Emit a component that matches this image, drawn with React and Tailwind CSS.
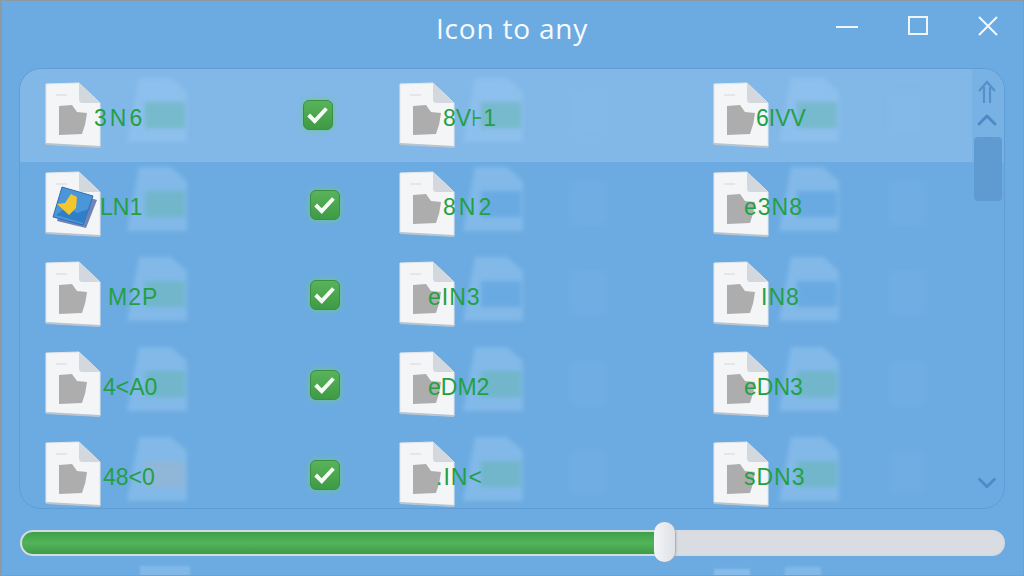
import { ChevronUp, ChevronDown } from 'lucide-react'

// label margin pulls the text over the page icon, it differs per cell in the picture
const ROWS = [
  {
    check: 'left-[258px] top-[18px]',
    cells: [
      { label: '3N6', ml: 'ml-[-7px] tracking-[3px]', ghost: 'green', art: 'folder' },
      { label: '8V⊦1', ml: 'ml-[-12px]', ghost: 'green', art: 'folder' },
      { label: '6IVV', ml: 'ml-[-13px]', ghost: 'green', art: 'folder' },
    ],
  },
  {
    check: 'left-[265px] top-[19px]',
    cells: [
      { label: 'LN1', ml: 'ml-[-1px]', ghost: 'green', art: 'picture' },
      { label: '8N2', ml: 'ml-[-12px] tracking-[3px]', ghost: 'blue', art: 'folder' },
      { label: 'e3N8', ml: 'ml-[-25px] tracking-[1px]', ghost: 'blue', art: 'folder' },
    ],
  },
  {
    check: 'left-[265px] top-[19px]',
    cells: [
      { label: 'M2P', ml: 'ml-[7px] tracking-[1px]', ghost: 'green', art: 'folder' },
      { label: 'eIN3', ml: 'ml-[-27px] tracking-[1px]', ghost: 'blue', art: 'folder' },
      { label: 'IN8', ml: 'ml-[-8px] tracking-[1px]', ghost: 'blue', art: 'folder' },
    ],
  },
  {
    check: 'left-[265px] top-[19px]',
    cells: [
      { label: '4<A0', ml: 'ml-[2px]', ghost: 'green', art: 'folder' },
      { label: 'eDM2', ml: 'ml-[-27px]', ghost: 'green', art: 'folder' },
      { label: 'eDN3', ml: 'ml-[-25px]', ghost: 'green', art: 'folder' },
    ],
  },
  {
    check: 'left-[265px] top-[19px]',
    cells: [
      { label: '48<0', ml: 'ml-[2px]', ghost: 'gray', art: 'folder' },
      { label: '.IN<', ml: 'ml-[-19px] tracking-[1px]', ghost: 'green', art: 'folder' },
      { label: 'sDN3', ml: 'ml-[-25px] tracking-[1px]', ghost: 'green', art: 'folder' },
    ],
  },
]

const GHOST_FILL = { green: '#62b3ae', blue: '#4f9bdc', gray: '#9db4c8' }

function FileIcon({ art }) {
  return (
    <svg width="56" height="66" viewBox="0 0 56 66" className="shrink-0 blur-[0.4px]">
      <path d="M1 2 L34 1 L55 21 L55 65 L1 62 Z" fill="#f4f5f7" stroke="#e3e6ea" strokeWidth="1" />
      <path d="M1 61 L55 64 L55 66 L1 63 Z" fill="#b9c4cf" />
      <path d="M34 1 L55 21 L37 21 Q34 21 34 17 Z" fill="#d3d8de" />
      <rect x="11" y="12" width="11" height="2" fill="#e4e6ea" />
      {art === 'folder' ? (
        <path d="M14 24 L27 23 L32 30 L42 31 Q41 42 37 52 L14 53 Z" fill="#adadae" />
      ) : (
        <g>
          <path d="M12 50 L41 57 L52 29 L22 20 Z" fill="#6f83b5" />
          <path d="M8 46 L38 54 L48 25 L17 16 Z" fill="#4a96d8" stroke="#2f6fb5" strokeWidth="1" />
          <path d="M11 44 L22 36 L32 42 L44 38 L38 52 Z" fill="#2f7fc8" />
          <path d="M12 33 L20 32 L26 23 L32 26 L31 37 L24 44 Z" fill="#f2c62f" />
        </g>
      )}
    </svg>
  )
}

function Ghost({ fill, className }) {
  return (
    <svg width="66" height="66" viewBox="0 0 66 66" className={`absolute blur-[2px] ${className}`}>
      <path d="M14 0 L46 0 L62 14 L62 64 L2 64 Z" fill="#98c8f1" fillOpacity="0.5" />
      {fill && <rect x="20" y="24" width="40" height="26" fill={fill} fillOpacity="0.5" />}
    </svg>
  )
}

function Check({ className }) {
  return (
    <div className={`absolute w-[30px] h-[30px] rounded-md bg-gradient-to-b from-[#58b35a] to-[#3f9a45] border border-[#3a8f42] shadow-[0_0_6px_#6fc88a] ${className}`}>
      <svg viewBox="0 0 30 30" className="w-full h-full">
        <path d="M5 15 L11.5 21.5 L24 8" fill="none" stroke="#f4faf4" strokeWidth="4.2" />
      </svg>
    </div>
  )
}

function Cell({ cell, width, ghostAt, farAt, children }) {
  return (
    <div className={`relative flex items-start shrink-0 ${width}`}>
      <Ghost fill={GHOST_FILL[cell.ghost]} className={ghostAt} />
      {farAt && <div className={`absolute top-[10px] w-[36px] h-[44px] bg-[#8fc2ee] opacity-10 blur-[3px] ${farAt}`} />}
      <FileIcon art={cell.art} />
      <span className={`relative mt-[24px] text-[23px] leading-6 text-[#23a043] font-['Liberation_Sans',sans-serif] ${cell.ml}`}>
        {cell.label}
      </span>
      {children}
    </div>
  )
}

function Row({ row, first }) {
  return (
    <div className={`flex pl-[25px] ${first ? 'h-[93px] pt-[13px] bg-[#82b8e8]' : 'h-[90px] pt-[9px]'}`}>
      <Cell cell={row.cells[0]} width="w-[354px]" ghostAt="left-[80px] top-[-4px]">
        <Check className={row.check} />
      </Cell>
      <Cell cell={row.cells[1]} width="w-[314px]" ghostAt="left-[62px] top-[-4px]" farAt="left-[172px]" />
      <Cell cell={row.cells[2]} width="w-[260px]" ghostAt="left-[64px] top-[-4px]" farAt="left-[176px]" />
    </div>
  )
}

function Scrollbar() {
  return (
    <div className="absolute right-0 top-0 bottom-0 w-[32px] flex flex-col items-center text-[#4c8bc5]">
      <div className="absolute top-0 left-0 right-0 h-[93px] bg-[#78b1e4] rounded-tr-[22px]" />
      <svg width="24" height="24" viewBox="0 0 24 24" className="relative mt-[11px] ml-[-2px] shrink-0 text-[#5590c8]" fill="none" stroke="currentColor" strokeWidth="2.2">
        <path d="M4 11 L12 2 L20 11 M9 7 V23 M15 7 V23" />
      </svg>
      <ChevronUp size={32} strokeWidth={2.2} className="relative ml-[-2px] shrink-0" />
      <div className="relative w-[28px] h-[64px] mt-[1px] rounded-sm bg-[#5f9bd0] shrink-0" />
      <ChevronDown size={30} strokeWidth={2.2} className="relative mt-auto mb-[10px] ml-[-2px] shrink-0" />
    </div>
  )
}

export default function App() {
  return (
    <div className="relative w-[1024px] h-[576px] overflow-hidden bg-[#6cabe1] border-l-2 border-t border-b border-r border-[#8d9aa6] font-['Open_Sans',sans-serif]">
      <div className="grid grid-cols-[1fr_auto_1fr] items-center h-[59px] pl-[20px] pr-[25px]">
        <div />
        <div className="text-[28px] leading-9 tracking-[0.8px] text-[#f7fbfe] mt-[-5px] ml-[4px]">Icon to any</div>
        <div className="flex justify-end items-center gap-[50px] text-white mt-[-8px]">
          <div className="w-[22px] h-[2px] bg-[#eef5fb]" />
          <div className="w-[20px] h-[19px] border-2 border-[#eef5fb] mt-[-2px]" />
          <svg width="20" height="20" viewBox="0 0 20 20" className="mt-[-2px]">
            <path d="M1 1 L19 19 M19 1 L1 19" stroke="#f4f9fd" strokeWidth="2" />
          </svg>
        </div>
      </div>

      <div className="relative ml-[17px] mt-[8px] w-[986px] h-[441px] rounded-[22px] overflow-hidden border border-[#5f9dd4]">
        {ROWS.map((row, i) => <Row key={i} row={row} first={i === 0} />)}
        <Scrollbar />
      </div>

      <div className="relative ml-[18px] mt-[21px] w-[985px] h-[26px] rounded-full bg-[#d9dde2] border-2 border-[#d5dbe1]">
        <div className="h-full w-[634px] rounded-l-full bg-gradient-to-b from-[#3f9f49] via-[#52b459] to-[#3d9c48]" />
        <div className="absolute left-[632px] top-[-10px] w-[21px] h-[40px] rounded-full bg-gradient-to-r from-[#f3f4f6] to-[#dfe2e6] shadow-[1px_0_2px_#9aa4ae]" />
      </div>

      {/* next list row peeking out under the slider */}
      <div className="absolute left-[138px] top-[565px] w-[50px] h-[20px] bg-[#8fc2ee] opacity-60 blur-[1px]" />
      <div className="absolute left-[712px] top-[568px] w-[36px] h-[20px] bg-[#9ccaf2] opacity-60 blur-[1px]" />
      <div className="absolute left-[783px] top-[566px] w-[36px] h-[20px] bg-[#8fc2ee] opacity-60 blur-[1px]" />
    </div>
  )
}
